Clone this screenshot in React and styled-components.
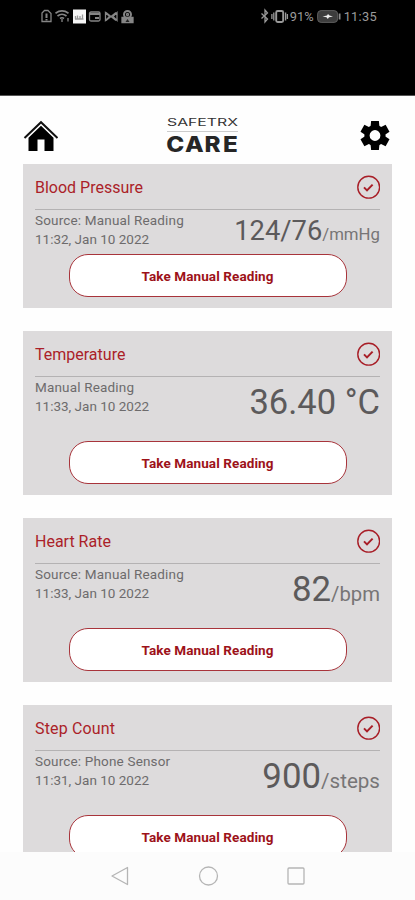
import styled, { createGlobalStyle } from "styled-components"

const GlobalStyle = createGlobalStyle`
*{
box-sizing:border-box;
}
body{
margin:0;
background-color:#fefefe;
font-family:Roboto, "Liberation Sans", sans-serif;
}
`
const Screen = styled.div`
height:900px;
display:flex;
flex-direction:column;
overflow:hidden;
`
const StatusBar = styled.div`
flex:none;
height:96px;
padding:8px 38px 0px 40px;
display:flex;
justify-content:space-between;
align-items:flex-start;
background-color:#000;
color:#9b9b9b;
border-bottom:1px solid #555;
`
const StatusGroup = styled.div`
display:flex;
align-items:center;
height:17px;
gap:${({ gap }) => gap}px;
`
const StatusText = styled.span`
font-size:12.8px;
line-height:17px;
letter-spacing:${({ spacing }) => spacing || 0}px;
margin-left:${({ left }) => left || 0}px;
margin-right:${({ right }) => right || 0}px;
`
const Header = styled.div`
flex:none;
height:68px;
padding:20px 22px 0px 23px;
display:flex;
justify-content:space-between;
align-items:flex-start;
`
const HeaderIcon = styled.div`
width:36px;
height:36px;
padding-top:3px;
display:flex;
justify-content:center;
`
const LogoBox = styled.div`
width:80px;
margin-right:9px;
`
const List = styled.div`
flex:1;
min-height:0;
overflow:hidden;
padding:0px 23px;
display:flex;
flex-direction:column;
gap:23px;
`
const Card = styled.div`
flex:none;
height:${({ compact }) => compact ? 144 : 164}px;
padding:0px 12px 11px;
display:flex;
flex-direction:column;
background-color:#dddbdc;
`
const CardHead = styled.div`
height:46px;
display:flex;
justify-content:space-between;
align-items:center;
border-bottom:1px solid #b4b2b3;
`
const Title = styled.div`
font-size:16px;
letter-spacing:${({ spacing }) => spacing || 0}px;
color:#ab1f29;
padding-top:2px;
`
const CardBody = styled.div`
flex:1;
display:flex;
justify-content:space-between;
align-items:flex-start;
color:#6d6b6c;
`
const Source = styled.div`
padding-top:1px;
font-size:13.5px;
line-height:19px;
letter-spacing:0.17px;
white-space:nowrap;
`
const Time = styled.div`
letter-spacing:0px;
`
const Value = styled.div`
height:39px;
margin-top:${({ top }) => top}px;
font-size:${({ size }) => size}px;
line-height:39px;
color:#5c5a5b;
white-space:nowrap;
`
const Unit = styled.span`
font-size:${({ size }) => size}px;
color:#777576;
`
const Button = styled.button`
flex:none;
align-self:center;
width:278px;
height:43px;
padding:0px;
border:1px solid #a8343b;
border-radius:19px;
background-color:#fff;
color:#9d1219;
font-family:inherit;
font-size:13.5px;
font-weight:700;
letter-spacing:0.1px;
cursor:pointer;
`
const NavBar = styled.div`
flex:none;
height:48px;
display:flex;
justify-content:center;
align-items:center;
gap:67px;
background-color:#fcfcfc;
`

const readings = [
    { title: "Blood Pressure", source: "Source: Manual Reading", time: "11:32, Jan 10 2022", value: "124/76", unit: "/mmHg", size: 27.3, unitSize: 16.8, top: 2, compact: true },
    { title: "Temperature", source: "Manual Reading", time: "11:33, Jan 10 2022", value: "36.40 °C", size: 34.5, top: 6 },
    { title: "Heart Rate", source: "Source: Manual Reading", time: "11:33, Jan 10 2022", value: "82", unit: "/bpm", size: 34.8, unitSize: 20.3, top: 6 },
    { title: "Step Count", source: "Source: Phone Sensor", time: "11:31, Jan 10 2022", value: "900", unit: "/steps", size: 34.8, unitSize: 20.6, spacing: 0.15, top: 6 },
]

const StatusIcons = () => (
    <svg width="96" height="17" viewBox="0 0 96 17" fill="none" stroke="#858585" strokeWidth="1.3">
        <path d="M4.500 2.500h3.500l3 3v8h-9v-8.500z" />
        <path d="M6.500 5.500v4.500M6.500 11v1.500" strokeWidth="2" />
        <path d="M15.500 5.200q6.500-4.500 13 0M17.500 8q4.500-3.500 9 0M20 10.500q2-1.500 4 0" strokeWidth="1.700" />
        <path d="M22 11l0 3M28 10v3.500" />
        <rect x="33" y="1.500" width="13" height="14" fill="#f5f5f5" stroke="none" />
        <path d="M35.500 11v-3M37.500 11V7.500M40 11V8M42.500 11V6.500M35 11h8.500" stroke="#999" />
        <rect x="49.500" y="4" width="10.500" height="9" rx="1.500" />
        <path d="M50 6h10M55 10h4" strokeWidth="1.800" />
        <path d="M65.500 4.500v8l4-4zM77 4.500v8l-4-4zM66 4.500l5 4 5-4M66 12.500l5-4 5 4" />
        <path d="M82 9.500h11v5h-11z" fill="#858585" />
        <circle cx="87.500" cy="6.500" r="3.500" strokeWidth="2" />
        <circle cx="87.500" cy="6.500" r="1" />
        <path d="M85.500 14l2-3 2 3z" fill="#222" stroke="none" />
    </svg>
)

const DeviceIcons = () => (
    <svg width="28" height="17" viewBox="0 0 28 17" fill="none" stroke="#999" strokeWidth="1.3">
        <path d="M0.500 5.500l6 5.500-2.500 3v-12l2.500 3-6 5.500" />
        <rect x="15.200" y="3" width="7" height="11" rx="1.500" strokeWidth="1.900" />
        <path d="M12.800 4.500v8M10.900 6v5M24.600 4.500v8M26.400 6v5" />
    </svg>
)

const Battery = () => (
    <svg width="25" height="17" viewBox="0 0 25 17">
        <rect x="0.600" y="2.600" width="20" height="11.800" rx="3.500" fill="#3d3d3d" stroke="#5c5c5c" />
        <path d="M5.500 8.500l4.500-1 1-1.500 1.500 1.500 3.500 1-4 .8-1.200 1.700-1.300-1.700z" fill="#eee" />
        <path d="M22.600 5.500v6" stroke="#8c8c8c" strokeWidth="1.800" />
    </svg>
)

const HomeIcon = () => (
    <svg width="36" height="34" viewBox="0 0 36 34">
        <path d="M1.500 19L18 3.200 34.500 19" fill="none" stroke="#111" strokeWidth="2" />
        <path d="M5.500 18.700L18 6.800l12.500 11.900V32H21.500V20.500h-7V32h-9z" fill="#000" />
    </svg>
)

const GearIcon = () => (
    <svg width="32" height="32" viewBox="-16 -16.500 32 32">
        <circle r="8" fill="none" stroke="#000" strokeWidth="5.200" />
        {[0, 60, 120, 180, 240, 300].map(angle => (
            <path key={angle} d="M-4.400 -9L-3.900 -14.500H3.900L4.400 -9z" transform={`rotate(${angle})`} fill="#000" />
        ))}
    </svg>
)

const Logo = () => (
    <svg width="80" height="40" viewBox="0 0 80 40">
        <text x="3" y="10" textLength="71" lengthAdjust="spacingAndGlyphs" fontFamily="Inter, sans-serif" fontSize="10" fontWeight="400" fill="#333">SAFETRX</text>
        <path d="M3 15.500h71" stroke="#ccc" />
        <text x="2 18.500 35.800 52.300" y="36.300" transform="scale(1.13 1)" fontFamily="Inter, sans-serif" fontSize="21.500" fontWeight="800" fill="#262626">CARE</text>
    </svg>
)

const CheckIcon = () => (
    <svg width="24" height="24" viewBox="0 0 24 24" fill="none" stroke="#a81e27">
        <circle cx="12.700" cy="12.200" r="10.900" strokeWidth="1.400" />
        <path d="M8 12.400l3 3 5.600-5.800" strokeWidth="2" />
    </svg>
)

export default function App() {
    return (
        <>
            <GlobalStyle />
            <Screen>
                <StatusBar>
                    <StatusGroup gap={0}>
                        <StatusIcons />
                    </StatusGroup>
                    <StatusGroup gap={1}>
                        <DeviceIcons />
                        <StatusText right={2}>91%</StatusText>
                        <Battery />
                        <StatusText left={1} spacing={0.3}>11:35</StatusText>
                    </StatusGroup>
                </StatusBar>
                <Header>
                    <HeaderIcon>
                        <HomeIcon />
                    </HeaderIcon>
                    <LogoBox>
                        <Logo />
                    </LogoBox>
                    <HeaderIcon>
                        <GearIcon />
                    </HeaderIcon>
                </Header>
                <List>
                    {readings.map(item => (
                        <Card key={item.title} compact={item.compact}>
                            <CardHead>
                                <Title spacing={item.spacing}>{item.title}</Title>
                                <CheckIcon />
                            </CardHead>
                            <CardBody>
                                <Source>
                                    <div>{item.source}</div>
                                    <Time>{item.time}</Time>
                                </Source>
                                <Value size={item.size} top={item.top}>
                                    {item.value}
                                    {item.unit && <Unit size={item.unitSize}>{item.unit}</Unit>}
                                </Value>
                            </CardBody>
                            <Button>Take Manual Reading</Button>
                        </Card>
                    ))}
                </List>
                <NavBar>
                    <svg width="20" height="22" viewBox="0 0 20 22" fill="none" stroke="#b5b5b5" strokeWidth="1.3">
                        <path d="M2 11L17.500 2.500v17z" strokeLinejoin="round" />
                    </svg>
                    <svg width="22" height="22" viewBox="0 0 22 22" fill="none" stroke="#b5b5b5" strokeWidth="1.3">
                        <circle cx="11.500" cy="11" r="9" />
                    </svg>
                    <svg width="20" height="22" viewBox="0 0 20 22" fill="none" stroke="#b5b5b5" strokeWidth="1.3">
                        <rect x="2" y="3" width="16" height="16" rx="1" />
                    </svg>
                </NavBar>
            </Screen>
        </>
    )
}
